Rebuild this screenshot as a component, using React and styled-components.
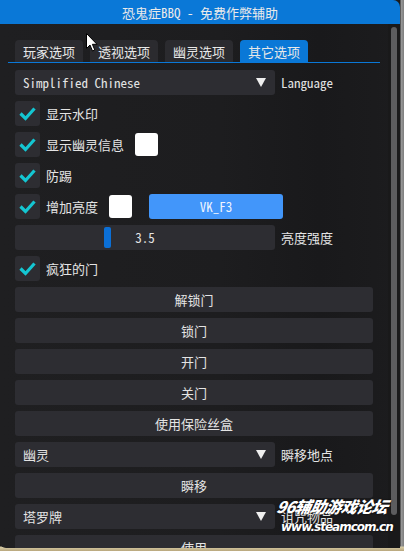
import React from 'react'
import styled, { createGlobalStyle } from 'styled-components'

const GlobalStyle = createGlobalStyle`
    html, body {
        margin: 0;
        padding: 0;
    }
    body {
        width: 404px;
        height: 551px;
        overflow: hidden;
        background: #7d7d7d;
        font-family: "Noto Sans Mono CJK SC", "Noto Sans CJK SC", "DejaVu Sans Mono", monospace;
        font-size: 13px;
        color: #e4e4e4;
    }
`

const Backdrop = styled.div`
    position: relative;
    width: 404px;
    height: 551px;
    background: linear-gradient(180deg, transparent 0, transparent 546px, #d6cba6 547px, #b9a77c 551px),
        linear-gradient(90deg, #1b1b1b 0, #1b1b1b 400px, #9a9a9a 401px, #7d7d7d 404px);
`

const Window = styled.div`
    width: 400px;
    height: 548px;
    display: flex;
    flex-direction: column;
    border-radius: 0 7px 0 6px;
    overflow: hidden;
    background: linear-gradient(90deg, #1f1f21 0%, #1d1d1f 55%, #19191b 80%, #1c1c1e 100%);
`

const TitleBar = styled.div`
    height: 24px;
    flex: none;
    display: flex;
    align-items: center;
    justify-content: center;
    background: #0a78d7;
    color: #eaeaea;
    line-height: 1;
`

const Body = styled.div`
    flex: 1;
    display: flex;
    min-height: 0;
`

const Content = styled.div`
    flex: 1;
    padding: 16px 15px 0 15px;
    display: flex;
    flex-direction: column;
    gap: 6px;
    overflow: hidden;

    & > * {
        flex-shrink: 0;
    }
`

const ScrollTrack = styled.div`
    width: 12px;
    flex: none;
    padding: 3px 3px 0 3px;
    box-sizing: border-box;
    background: #19191a;
`

const ScrollGrab = styled.div`
    width: 6px;
    height: 488px;
    border-radius: 3px;
    background: #5c5c5e;
`

const TabBar = styled.div`
    position: relative;
    display: flex;
    gap: 7px;
    height: 23px;
    margin-bottom: 1px;

    &::after {
        content: '';
        position: absolute;
        left: -7px;
        right: -7px;
        bottom: 0;
        height: 1px;
        background: #0a78d7;
    }
`

const Tab = styled.div`
    width: 68px;
    display: flex;
    align-items: center;
    justify-content: center;
    border-radius: 4px 4px 0 0;
    background: ${props => (props.active ? '#0a78d7' : '#2b2b2f')};
    color: #e8e8e8;
    line-height: 1;
`

const Row = styled.div`
    display: flex;
    align-items: center;
    height: 25px;
    gap: 6px;
`

const Frame = styled.div`
    height: 25px;
    border-radius: 3px;
    background: #2d2d32;
    box-sizing: border-box;
`

const Combo = styled(Frame)`
    width: 260px;
    flex: none;
    display: flex;
    align-items: center;
    justify-content: space-between;
    padding: 0 8px 0 8px;
`

const Arrow = styled.span`
    width: 0;
    height: 0;
    border-left: 5px solid transparent;
    border-right: 5px solid transparent;
    border-top: 9px solid #efefef;
    margin-right: 1px;
`

const Label = styled.span`
    white-space: nowrap;
    line-height: 1;
`

const Box = styled(Frame)`
    width: 25px;
    flex: none;
    display: flex;
    align-items: center;
    justify-content: center;
`

const Swatch = styled.div`
    width: 23px;
    height: 23px;
    border-radius: 3px;
    background: #ffffff;
    flex: none;
    margin-left: ${props => props.ml || 0}px;
`

const KeyButton = styled.div`
    width: 134px;
    height: 25px;
    border-radius: 3px;
    background: #4296fa;
    display: flex;
    align-items: center;
    justify-content: center;
    color: #eef4ff;
    margin-left: 11px;
    line-height: 1;
`

const Slider = styled(Frame)`
    position: relative;
    width: 260px;
    flex: none;
    display: flex;
    align-items: center;
    justify-content: center;
`

const SliderGrab = styled.div`
    position: absolute;
    top: 2px;
    bottom: 2px;
    width: 7px;
    border-radius: 2px;
    background: #0b6fd6;
`

const Button = styled(Frame)`
    width: 358px;
    flex: none;
    display: flex;
    align-items: center;
    justify-content: center;
    line-height: 1;
`

const Cursor = styled.svg`
    position: absolute;
    left: 86px;
    top: 33px;
`

const Watermark = styled.div`
    position: absolute;
    left: 277px;
    top: 498px;
    display: flex;
    flex-direction: column;
    align-items: flex-start;
    font-family: "Noto Sans CJK SC", "DejaVu Sans", sans-serif;
    font-weight: 900;
    font-style: italic;
    color: #ffffff;
    text-shadow: 0 0 2px rgba(0, 0, 0, 0.8);
    line-height: 1;
`

const WmTitle = styled.span`
    font-size: 16px;
    letter-spacing: -0.6px;
    transform: skewX(-12deg);
`

const WmUrl = styled.span`
    margin-top: 7px;
    margin-left: 4px;
    font-family: "DejaVu Sans", sans-serif;
    font-size: 12px;
    letter-spacing: -1px;
`

const Check = () => (
    <svg width="25" height="25" viewBox="0 0 25 25">
        <polyline points="5.5,12.5 10.5,17.5 19.5,7.5" fill="none" stroke="#14c6d2" strokeWidth="3.2" />
    </svg>
)

const CheckRow = ({ label, children }) => (
    <Row>
        <Box>
            <Check />
        </Box>
        <Label>{label}</Label>
        {children}
    </Row>
)

const ComboRow = ({ value, label }) => (
    <Row>
        <Combo>
            <Label>{value}</Label>
            <Arrow />
        </Combo>
        <Label>{label}</Label>
    </Row>
)

const tabs = ['玩家选项', '透视选项', '幽灵选项', '其它选项']

export default function App() {
    return (
        <Backdrop>
            <GlobalStyle />
            <Window>
                <TitleBar>恐鬼症BBQ - 免费作弊辅助</TitleBar>
                <Body>
                    <Content>
                        <TabBar>
                            {tabs.map((t, i) => (
                                <Tab key={t} active={i === 3}>
                                    {t}
                                </Tab>
                            ))}
                        </TabBar>
                        <ComboRow value="Simplified Chinese" label="Language" />
                        <CheckRow label="显示水印" />
                        <CheckRow label="显示幽灵信息">
                            <Swatch ml={5} />
                        </CheckRow>
                        <CheckRow label="防踢" />
                        <CheckRow label="增加亮度">
                            <Swatch ml={5} />
                            <KeyButton>VK_F3</KeyButton>
                        </CheckRow>
                        <Row>
                            <Slider>
                                <SliderGrab style={{ left: `${(3.5 / 10) * 253}px` }} />
                                <Label>3.5</Label>
                            </Slider>
                            <Label>亮度强度</Label>
                        </Row>
                        <CheckRow label="疯狂的门" />
                        <Button>解锁门</Button>
                        <Button>锁门</Button>
                        <Button>开门</Button>
                        <Button>关门</Button>
                        <Button>使用保险丝盒</Button>
                        <ComboRow value="幽灵" label="瞬移地点" />
                        <Button>瞬移</Button>
                        <ComboRow value="塔罗牌" label="诅咒物品" />
                        <Button>使用</Button>
                    </Content>
                    <ScrollTrack>
                        <ScrollGrab />
                    </ScrollTrack>
                </Body>
            </Window>
            <Cursor width="12" height="19" viewBox="0 0 12 19">
                <path d="M0.5 0.5 L0.5 15.5 L4 12 L6.5 18 L8.8 17 L6.4 11.3 L11 11.3 Z" fill="#ffffff" stroke="#000000" strokeWidth="1" />
            </Cursor>
            <Watermark>
                <WmTitle>96辅助游戏论坛</WmTitle>
                <WmUrl>www.steamcom.cn</WmUrl>
            </Watermark>
        </Backdrop>
    )
}
